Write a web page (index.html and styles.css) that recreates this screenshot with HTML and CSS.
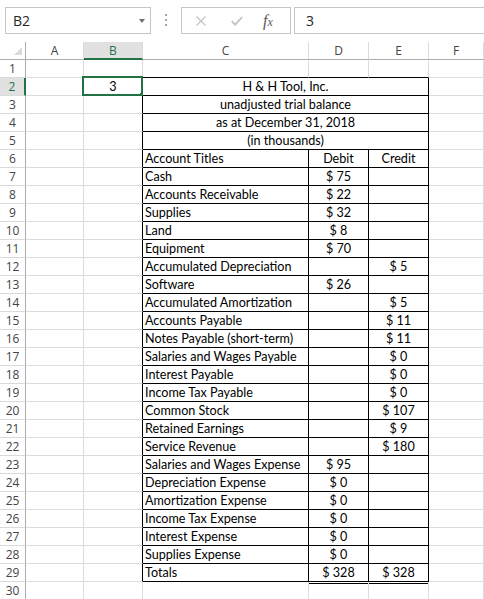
FILE: index.html
```html
<!DOCTYPE html>
<html lang="en">

<head>
    <meta charset="UTF-8">
    <meta name="viewport" content="width=device-width, initial-scale=1.0">
    <title>Trial balance</title>
    <link rel="stylesheet" href="styles.css">
</head>

<body>
    <div class="formula-bar">
        <div class="name-box"><span>B2</span><span class="drop"></span></div>
        <div class="grip"><i></i><i></i><i></i></div>
        <div class="fx-tools">
            <svg class="cancel" width="10" height="10" viewBox="0 0 10 10">
                <path d="M0.5 0.5L9.5 9.5M9.5 0.5L0.5 9.5" stroke="#c2c2c2" stroke-width="1.2" fill="none" />
            </svg>
            <svg class="enter" width="12" height="10" viewBox="0 0 12 10">
                <path d="M0.8 5.2L4.2 8.6L11.2 1" stroke="#c2c2c2" stroke-width="1.8" fill="none" />
            </svg>
            <span class="fx">f<span>x</span></span>
        </div>
        <div class="formula-input">3</div>
    </div>

    <div class="grid">
        <!-- column headers -->
        <div class="corner"><span class="tri"></span></div>
        <div class="ch">A</div><div class="ch on">B</div><div class="ch">C</div><div class="ch">D</div><div class="ch">E</div><div class="ch">F</div>

        <div class="rh">1</div><div class="c"></div><div class="c"></div><div class="c tb"></div><div class="c tb"></div><div class="c tb"></div><div class="c"></div>
        <div class="rh on">2</div><div class="c"></div><div class="c lb n">3</div><div class="c bx t">H &amp; H Tool, Inc.</div><div class="c"></div>
        <div class="rh">3</div><div class="c"></div><div class="c lb"></div><div class="c bx t">unadjusted trial balance</div><div class="c"></div>
        <div class="rh">4</div><div class="c"></div><div class="c lb"></div><div class="c bx t">as at December 31, 2018</div><div class="c"></div>
        <div class="rh">5</div><div class="c"></div><div class="c lb"></div><div class="c bx t">(in thousands)</div><div class="c"></div>
        <div class="rh">6</div><div class="c"></div><div class="c lb"></div><div class="c bx">Account Titles</div><div class="c bx n">Debit</div><div class="c bx n">Credit</div><div class="c"></div>
        <div class="rh">7</div><div class="c"></div><div class="c lb"></div><div class="c bx">Cash</div><div class="c bx n">$ 75</div><div class="c bx n"></div><div class="c"></div>
        <div class="rh">8</div><div class="c"></div><div class="c lb"></div><div class="c bx">Accounts Receivable</div><div class="c bx n">$ 22</div><div class="c bx n"></div><div class="c"></div>
        <div class="rh">9</div><div class="c"></div><div class="c lb"></div><div class="c bx">Supplies</div><div class="c bx n">$ 32</div><div class="c bx n"></div><div class="c"></div>
        <div class="rh">10</div><div class="c"></div><div class="c lb"></div><div class="c bx">Land</div><div class="c bx n">$ 8</div><div class="c bx n"></div><div class="c"></div>
        <div class="rh">11</div><div class="c"></div><div class="c lb"></div><div class="c bx">Equipment</div><div class="c bx n">$ 70</div><div class="c bx n"></div><div class="c"></div>
        <div class="rh">12</div><div class="c"></div><div class="c lb"></div><div class="c bx">Accumulated Depreciation</div><div class="c bx n"></div><div class="c bx n">$ 5</div><div class="c"></div>
        <div class="rh">13</div><div class="c"></div><div class="c lb"></div><div class="c bx">Software</div><div class="c bx n">$ 26</div><div class="c bx n"></div><div class="c"></div>
        <div class="rh">14</div><div class="c"></div><div class="c lb"></div><div class="c bx">Accumulated Amortization</div><div class="c bx n"></div><div class="c bx n">$ 5</div><div class="c"></div>
        <div class="rh">15</div><div class="c"></div><div class="c lb"></div><div class="c bx">Accounts Payable</div><div class="c bx n"></div><div class="c bx n">$ 11</div><div class="c"></div>
        <div class="rh">16</div><div class="c"></div><div class="c lb"></div><div class="c bx">Notes Payable (short-term)</div><div class="c bx n"></div><div class="c bx n">$ 11</div><div class="c"></div>
        <div class="rh">17</div><div class="c"></div><div class="c lb"></div><div class="c bx">Salaries and Wages Payable</div><div class="c bx n"></div><div class="c bx n">$ 0</div><div class="c"></div>
        <div class="rh">18</div><div class="c"></div><div class="c lb"></div><div class="c bx">Interest Payable</div><div class="c bx n"></div><div class="c bx n">$ 0</div><div class="c"></div>
        <div class="rh">19</div><div class="c"></div><div class="c lb"></div><div class="c bx">Income Tax Payable</div><div class="c bx n"></div><div class="c bx n">$ 0</div><div class="c"></div>
        <div class="rh">20</div><div class="c"></div><div class="c lb"></div><div class="c bx">Common Stock</div><div class="c bx n"></div><div class="c bx n">$ 107</div><div class="c"></div>
        <div class="rh">21</div><div class="c"></div><div class="c lb"></div><div class="c bx">Retained Earnings</div><div class="c bx n"></div><div class="c bx n">$ 9</div><div class="c"></div>
        <div class="rh">22</div><div class="c"></div><div class="c lb"></div><div class="c bx">Service Revenue</div><div class="c bx n"></div><div class="c bx n">$ 180</div><div class="c"></div>
        <div class="rh">23</div><div class="c"></div><div class="c lb"></div><div class="c bx">Salaries and Wages Expense</div><div class="c bx n">$ 95</div><div class="c bx n"></div><div class="c"></div>
        <div class="rh">24</div><div class="c"></div><div class="c lb"></div><div class="c bx">Depreciation Expense</div><div class="c bx n">$ 0</div><div class="c bx n"></div><div class="c"></div>
        <div class="rh">25</div><div class="c"></div><div class="c lb"></div><div class="c bx">Amortization Expense</div><div class="c bx n">$ 0</div><div class="c bx n"></div><div class="c"></div>
        <div class="rh">26</div><div class="c"></div><div class="c lb"></div><div class="c bx">Income Tax Expense</div><div class="c bx n">$ 0</div><div class="c bx n"></div><div class="c"></div>
        <div class="rh">27</div><div class="c"></div><div class="c lb"></div><div class="c bx">Interest Expense</div><div class="c bx n">$ 0</div><div class="c bx n"></div><div class="c"></div>
        <div class="rh">28</div><div class="c"></div><div class="c lb"></div><div class="c bx">Supplies Expense</div><div class="c bx n">$ 0</div><div class="c bx n"></div><div class="c"></div>
        <div class="rh">29</div><div class="c"></div><div class="c lb"></div><div class="c bx">Totals</div><div class="c bx n dbl">$ 328</div><div class="c bx n dbl">$ 328</div><div class="c"></div>
        <div class="rh">30</div><div class="c"></div><div class="c"></div><div class="c"></div><div class="c"></div><div class="c"></div><div class="c"></div>

        <!-- active cell B2 -->
        <div class="sel"><span class="handle"></span></div>
    </div>
</body>

</html>
```

FILE: styles.css
```css
body {
    margin: 0;
    background: #ffffff;
    font-family: Lato, "Liberation Sans", sans-serif;
    color: #000000;
    overflow: hidden;
}

/* formula bar */
.formula-bar {
    display: flex;
    align-items: flex-start;
    height: 42px;
    padding: 7px 0 0 5px;
    box-sizing: border-box;
    font-family: "Open Sans", sans-serif;
    font-size: 14px;
    color: #262626;
}

.name-box {
    width: 146px;
    height: 27px;
    box-sizing: border-box;
    border: 1px solid #c6c6c6;
    display: flex;
    align-items: center;
    padding: 0 5px 0 7px;
}

.drop {
    margin-left: auto;
    width: 0;
    height: 0;
    border-left: 3.5px solid transparent;
    border-right: 3.5px solid transparent;
    border-top: 4px solid #707070;
}

.grip {
    display: flex;
    flex-direction: column;
    gap: 3px;
    margin: 7px 14px 0 14px;
}

.grip i {
    display: block;
    width: 2px;
    height: 2px;
    background: #a6a6a6;
}

.fx-tools {
    width: 110px;
    height: 27px;
    box-sizing: border-box;
    border: 1px solid #c6c6c6;
    display: flex;
    align-items: center;
    padding-left: 14px;
}

.fx-tools .enter {
    margin-left: 25px;
}

.fx {
    margin-left: 20px;
    font-family: "Liberation Serif", serif;
    font-style: italic;
    font-size: 16px;
    color: #595959;
}

.fx span {
    font-size: 12px;
}

.formula-input {
    flex: 1;
    height: 27px;
    box-sizing: border-box;
    border: 1px solid #c6c6c6;
    border-right: none;
    margin-left: 3px;
    padding-left: 11px;
    line-height: 25px;
}

/* sheet grid */
.grid {
    position: relative;
    display: grid;
    grid-template-columns: 26px 58px 59px 166px 60px 60px 55px;
    grid-auto-rows: 18px;
    font-size: 12.6px;
}

.grid > div {
    box-sizing: border-box;
    white-space: nowrap;
    overflow: hidden;
}

.corner {
    display: flex;
    align-items: flex-end;
    justify-content: flex-end;
    padding: 0 3px 4px 0;
    border-right: 1px solid #ababab;
    border-bottom: 1px solid #ababab;
}

.tri {
    width: 0;
    height: 0;
    border-left: 8px solid transparent;
    border-bottom: 8px solid #dadada;
}

.ch,
.rh {
    font-family: "Open Sans", sans-serif;
    font-size: 12px;
    color: #444444;
    text-align: center;
    line-height: 17px;
}

.ch {
    border-right: 1px solid #dadada;
    border-bottom: 1px solid #ababab;
}

.rh {
    border-right: 1px solid #ababab;
    border-bottom: 1px solid #dadada;
}

.ch.on {
    background: #e1e1e1;
    color: #217346;
    border-bottom: 2px solid #217346;
}

.rh.on {
    background: #e1e1e1;
    color: #217346;
    border-right: 2px solid #217346;
}

.c {
    border-right: 1px solid #dadcdd;
    border-bottom: 1px solid #dadcdd;
    line-height: 17px;
    padding: 0 2px;
}

/* black borders round the trial balance */
.bx {
    border-right-color: #000000 !important;
    border-bottom-color: #000000 !important;
}

.lb {
    border-right-color: #000000 !important;
}

.tb {
    border-bottom-color: #000000 !important;
}

.t {
    grid-column: span 3;
    text-align: center;
}

.n {
    text-align: center;
}

.dbl {
    box-shadow: 0 1px 0 #ffffff, 0 2px 0 #000000;
}

.sel {
    position: absolute;
    left: 82px;
    top: 34px;
    width: 61px;
    height: 20px;
    box-sizing: border-box;
    border: 2px solid #217346;
}

.handle {
    position: absolute;
    right: -5px;
    bottom: -5px;
    width: 5px;
    height: 5px;
    background: #217346;
    border: 1px solid #ffffff;
}
```
